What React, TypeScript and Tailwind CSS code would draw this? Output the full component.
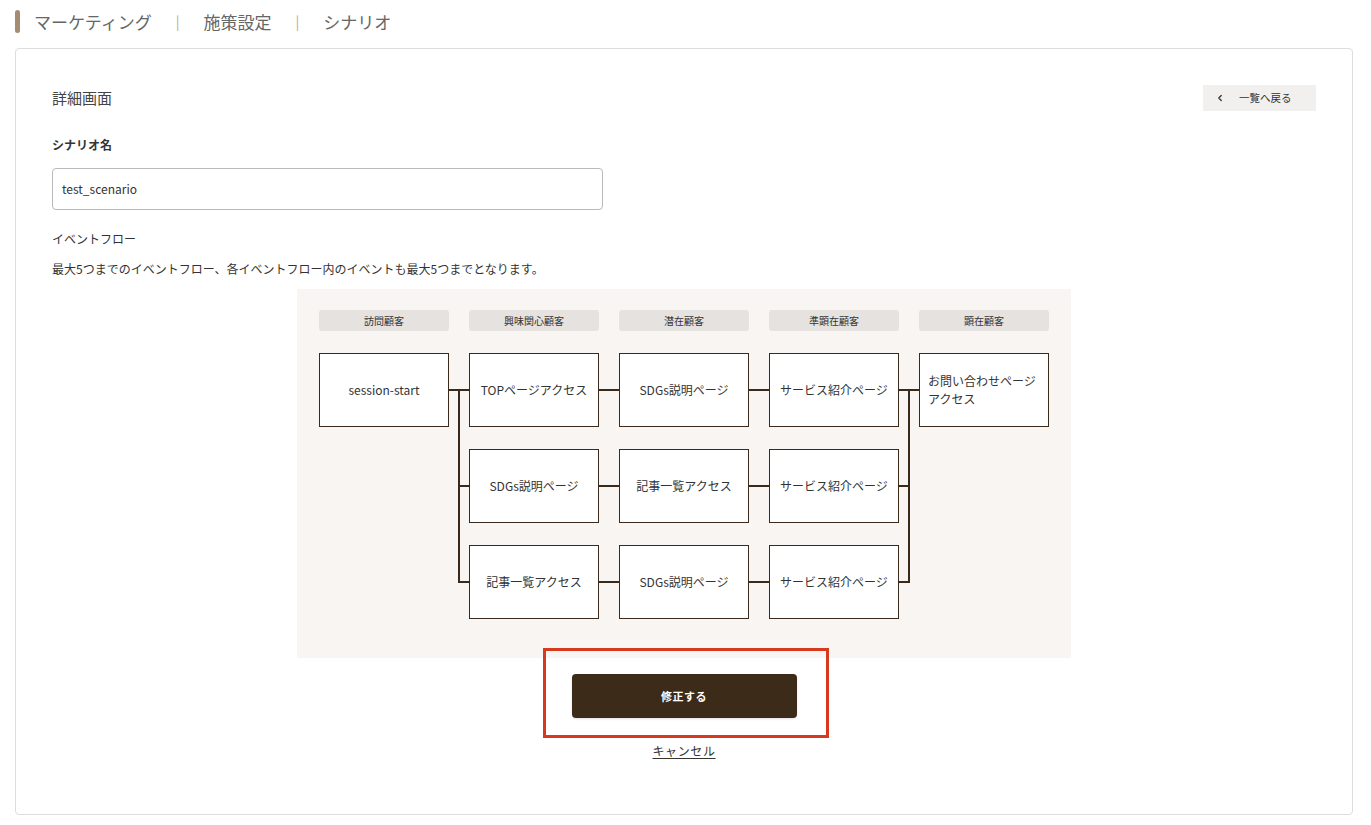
import { ChevronLeft } from "lucide-react";

const stages = ["訪問顧客", "興味関心顧客", "潜在顧客", "準顕在顧客", "顕在顧客"];

const middleRows = [
  ["TOPページアクセス", "SDGs説明ページ", "サービス紹介ページ"],
  ["SDGs説明ページ", "記事一覧アクセス", "サービス紹介ページ"],
  ["記事一覧アクセス", "SDGs説明ページ", "サービス紹介ページ"],
];

const LINE = "#3a2a1b";

const Box = ({ children, left }: { children: React.ReactNode; left?: boolean }) => (
  <div
    className={`flex h-[74px] w-[130px] items-center border border-[#3a2a1b] bg-white text-[12px] leading-[18px] text-[#333] ${
      left ? "justify-start px-2" : "justify-center text-center"
    }`}
  >
    {children}
  </div>
);

// left fork: one source spreading to three rows
const ForkOut = () => (
  <svg width="20" height="266" viewBox="0 0 20 266" className="shrink-0">
    <path d="M0 37 H20 M10 37 V230 M10 133 H20 M10 229 H20" stroke={LINE} strokeWidth="2" fill="none" />
  </svg>
);

// right fork: three rows merging into one target
const ForkIn = () => (
  <svg width="20" height="266" viewBox="0 0 20 266" className="shrink-0">
    <path d="M0 37 H20 M10 37 V230 M0 133 H10 M0 229 H10" stroke={LINE} strokeWidth="2" fill="none" />
  </svg>
);

const Link = () => <div className="h-[2px] w-5 shrink-0 bg-[#3a2a1b]" />;

export default function App() {
  return (
    <div
      className="min-h-screen bg-white pb-2 text-[#333]"
      style={{ fontFamily: '"Noto Sans CJK JP", "Noto Sans", sans-serif' }}
    >
      {/* breadcrumb */}
      <header className="flex items-center pl-[15px] pt-[10px]">
        <span className="h-[23px] w-[5px] rounded-sm bg-[#a38c72]" />
        <nav className="ml-[14px] flex items-center text-[17px] leading-[23px] text-[#666]">
          <span>マーケティング</span>
          <span className="mx-[24px] text-[14px] text-[#aaa]">|</span>
          <span>施策設定</span>
          <span className="mx-[24px] text-[14px] text-[#aaa]">|</span>
          <span>シナリオ</span>
        </nav>
      </header>

      <main className="ml-[15px] mr-[18px] mt-[15px] rounded border border-[#ddd] px-[36px] pb-[54px] pt-[36px]">
        <div className="flex h-[26px] items-center justify-between">
          <h1 className="text-[15px] text-[#444]">詳細画面</h1>
          <button className="flex h-[26px] w-[113px] items-center bg-[#f1f0ef] pl-[12px] text-[10.5px] text-[#333]">
            <ChevronLeft size={10} strokeWidth={3} />
            <span className="ml-[14px]">一覧へ戻る</span>
          </button>
        </div>

        <p className="mt-[25px] text-[12px] font-bold leading-[18px]">シナリオ名</p>
        <div className="mt-[14px] flex h-[42px] w-[551px] items-center rounded border border-[#b9b9b9] px-[9px] text-[12px]">
          test_scenario
        </div>

        <p className="mt-[20px] text-[12px] leading-[18px]">イベントフロー</p>
        <p className="mt-3 text-[12px] leading-[18px]">
          最大5つまでのイベントフロー、各イベントフロー内のイベントも最大5つまでとなります。
        </p>

        {/* flow diagram */}
        <div className="mx-auto mt-[11px] w-[774px] bg-[#f8f5f2] px-[22px] pb-[39px] pt-[21px]">
          <div className="flex gap-5">
            {stages.map((s) => (
              <div
                key={s}
                className="flex h-[21px] w-[130px] items-center justify-center rounded-[3px] bg-[#e5e2df] text-[10px] text-[#333]"
              >
                {s}
              </div>
            ))}
          </div>

          <div className="mt-[22px] flex items-start">
            <Box>session-start</Box>
            <ForkOut />
            <div className="flex flex-col gap-[22px]">
              {middleRows.map((row, i) => (
                <div key={i} className="flex items-center">
                  <Box>{row[0]}</Box>
                  <Link />
                  <Box>{row[1]}</Box>
                  <Link />
                  <Box>{row[2]}</Box>
                </div>
              ))}
            </div>
            <ForkIn />
            <Box left>
              お問い合わせページ
              <br />
              アクセス
            </Box>
          </div>
        </div>

        <div className="mt-4 flex flex-col items-center">
          <div className="relative">
            <button className="h-[44px] w-[225px] rounded bg-[#3d2b19] text-[11px] font-bold tracking-wider text-white shadow-sm">
              修正する
            </button>
            <div className="pointer-events-none absolute -bottom-[20px] -left-[29px] -right-[32px] -top-[26px] border-[3px] border-[#d6391d]" />
          </div>
          <a href="#" className="mt-[24px] text-[12px] leading-[18px] tracking-wider text-[#333] underline underline-offset-2">
            キャンセル
          </a>
        </div>
      </main>
    </div>
  );
}
